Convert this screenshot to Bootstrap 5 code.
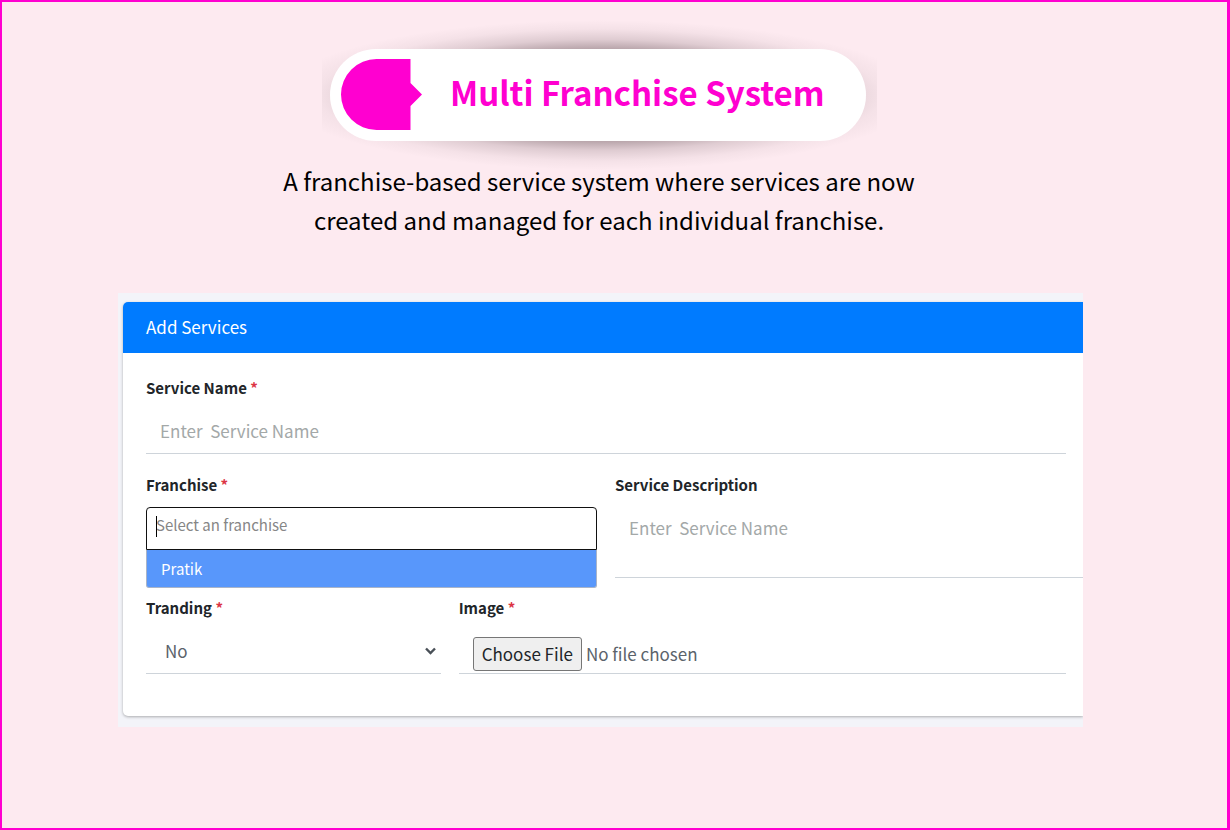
<!DOCTYPE html>
<html lang="en">
<head>
<meta charset="utf-8">
<meta name="viewport" content="width=device-width, initial-scale=1">
<title>Multi Franchise System</title>
<link href="https://cdn.jsdelivr.net/npm/bootstrap@5.3.0/dist/css/bootstrap.min.css" rel="stylesheet">
<style>
  :root { --accent: #ff00d0; --rule: #ced4da; --ink: #212529; }
  body { background: #fdeaf0; font-family: "Noto Sans CJK SC", sans-serif; color: var(--ink); }
  .page-frame { border: 2px solid var(--accent); border-right-width: 3px; padding: 47px 144px 40px 116px; }
  .page-head { padding-right: 3px; }

  /* heading pill with its oval shadow */
  .pill-wrap { position: relative; padding: 0 11px 0 8px; width: 555px; max-width: 100%; }
  .pill-wrap::before {
    content: ""; position: absolute; inset: -29px 0;
    background: radial-gradient(ellipse 320px 75px at center, rgba(40,20,25,.8) 0%, rgba(40,20,25,.33) 61%, rgba(40,20,25,.14) 74%, rgba(40,20,25,.04) 88%, transparent 100%);
  }
  .pill { position: relative; background: #fff; border-radius: 46px; min-height: 92px; padding: 0 41px 6px 11px; }
  .pill-tag { width: 81px; height: 71px; margin-top: 5px; }
  .pill-title { font-size: 33px; line-height: 40px; font-weight: 700; color: var(--accent); white-space: nowrap; }
  .intro { font-size: 24px; line-height: 39px; color: #000; margin: 20px 0 54px; }

  .panel { background: #f3f4f9; padding: 9px 0 11px 5px; overflow: hidden; }
  .service-card { border: 0; border-radius: 5px 0 0 5px; box-shadow: 0 1px 3px rgba(0,0,0,.3); }
  .service-card .card-header { background: #007bff; color: #fff; border: 0; border-radius: 5px 0 0 0; padding: 0 23px 2px; font-size: 17px; line-height: 49px; }
  .service-card .card-body { padding: 23px 17px 42px 23px; }
  .service-card .row { --bs-gutter-x: 18px; }
  .name-field { margin-bottom: 19px; }
  .field-label { display: block; font-size: 15px; line-height: 24px; font-weight: 700; margin-bottom: 8px; }
  .field-label span { color: #dc3545; }
  .line-control { border: 0; border-bottom: 1px solid var(--rule); border-radius: 0; padding: 0 14px; font-size: 17px; line-height: 24px; color: #5b636b; height: 46px; background-color: transparent; }
  .line-control::placeholder { color: #a3a8a8; opacity: 1; }
  textarea.line-control { height: 73px; padding-top: 11px; resize: none; }
  .to-edge { margin-right: -17px; }
  select.line-control { padding-left: 19px; background-position: right 4px center; background-size: 13px 13px;
    background-image: url("data:image/svg+xml,%3Csvg xmlns='http://www.w3.org/2000/svg' viewBox='0 0 13 13'%3E%3Cpath d='M2 4.5l4.500 4.500 4.500-4.500' fill='none' stroke='%23495057' stroke-width='2.400'/%3E%3C/svg%3E"); }
  .file-line { display: block; width: 100%; padding-top: 9px; }
  .file-line::file-selector-button { font: inherit; color: var(--ink); background: #efefef; border: 1px solid #767676; border-radius: 3px; padding: 4px 8px; margin-right: 4px; }

  .picker { position: relative; margin-top: 10px; }
  .picker input { display: block; width: 100%; height: 43px; border: 1px solid #111; border-radius: 4px 4px 0 0; padding: 0 9px 8px; font-size: 15px; outline: 0; background: #fff; }
  .picker input::placeholder { color: #868686; opacity: 1; }
  .picker .text-caret { position: absolute; left: 10px; top: 9px; width: 1px; height: 21px; background: #000; }
  .picker button { display: block; width: 100%; border: 1px solid #a9b4c8; border-top: 0; background: #5897fb; color: #fff; text-align: left; font-size: 15px; line-height: 37px; padding: 0 14px; border-radius: 0 0 3px 3px; }
</style>
</head>
<body>
<main class="page-frame min-vh-100">
  <header class="page-head d-flex flex-column align-items-center text-center">
    <div class="pill-wrap">
      <div class="pill d-flex align-items-center justify-content-between">
        <svg class="pill-tag" viewBox="0 0 81 71" aria-hidden="true"><path d="M35.500 0H69.500V24L81 35.500L69.500 47V71H35.500A35.500 35.500 0 0 1 35.500 0Z" fill="#ff00d0"/></svg>
        <h1 class="pill-title mb-0">Multi Franchise System</h1>
      </div>
    </div>
    <p class="intro position-relative">A franchise-based service system where services are now<br>created and managed for each individual franchise.</p>
  </header>

  <section class="panel">
    <form class="card service-card">
      <div class="card-header">Add Services</div>
      <div class="card-body">
        <div class="name-field">
          <label class="field-label" for="name">Service Name <span>*</span></label>
          <input class="form-control line-control" id="name" type="text" placeholder="Enter&nbsp; Service Name">
        </div>
        <div class="row mb-2">
          <div class="col-6">
            <label class="field-label" for="franchise">Franchise <span>*</span></label>
            <div class="picker">
              <input id="franchise" type="text" placeholder="Select an franchise">
              <span class="text-caret"></span>
              <button type="button">Pratik</button>
            </div>
          </div>
          <div class="col-6">
            <label class="field-label" for="description">Service Description</label>
            <div class="to-edge"><textarea class="form-control line-control" id="description" placeholder="Enter&nbsp; Service Name"></textarea></div>
          </div>
        </div>
        <div class="row">
          <div class="col-4">
            <label class="field-label" for="tranding">Tranding <span>*</span></label>
            <select class="form-select line-control" id="tranding"><option>No</option><option>Yes</option></select>
          </div>
          <div class="col-8">
            <label class="field-label" for="image">Image <span>*</span></label>
            <input class="line-control file-line" id="image" type="file">
          </div>
        </div>
      </div>
    </form>
  </section>
</main>
<script src="https://cdn.jsdelivr.net/npm/bootstrap@5.3.0/dist/js/bootstrap.bundle.min.js"></script>
</body>
</html>
